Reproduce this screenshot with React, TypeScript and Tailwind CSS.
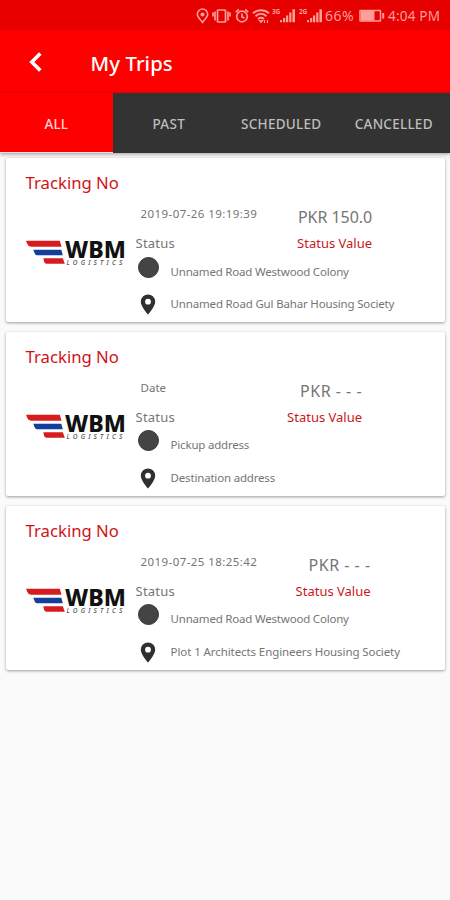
import React from 'react';

type Trip = {
  date: string;
  dateSpacing: string;
  price: string;
  pickup: string;
  destination: string;
  destinationSpacing: string;
  summaryWidth: string;
  priceSpacing: string;
};

const trips: Trip[] = [
  {
    date: '2019-07-26 19:19:39',
    dateSpacing: 'tracking-[0.42px]',
    price: 'PKR 150.0',
    pickup: 'Unnamed Road Westwood Colony',
    destination: 'Unnamed Road Gul Bahar Housing Society',
    destinationSpacing: 'tracking-[-0.170px]',
    summaryWidth: 'w-[236.500px]',
    priceSpacing: 'tracking-[-0.05px]',
  },
  {
    date: 'Date',
    dateSpacing: 'tracking-[0px]',
    price: 'PKR - - -',
    pickup: 'Pickup address',
    destination: 'Destination address',
    destinationSpacing: 'tracking-[-0.180px]',
    summaryWidth: 'w-[226.500px]',
    priceSpacing: 'tracking-[0.5px]',
  },
  {
    date: '2019-07-25 18:25:42',
    dateSpacing: 'tracking-[0.42px]',
    price: 'PKR - - -',
    pickup: 'Unnamed Road Westwood Colony',
    destination: 'Plot 1 Architects Engineers Housing Society',
    destinationSpacing: 'tracking-[-0.090px]',
    summaryWidth: 'w-[235px]',
    priceSpacing: 'tracking-[0.5px]',
  },
];

function Signal({ label }: { label: string }) {
  return (
    <span className="flex w-[24px] items-end">
      <span className="h-[16px] w-[8px] text-[6.5px] font-bold leading-[8px] tracking-[-0.3px]">{label}</span>
      <svg width="16" height="16" viewBox="0 0 16 16" fill="currentColor">
        <path d="M0 12h2v2.300H0zM3 10h2.200v4.300H3zM6 7.500h2.200v6.800H6zM9.200 4.500h2.200v9.800H9.200zM12.400 1.300H15v13h-2.600z" />
      </svg>
    </span>
  );
}

function StatusBar() {
  return (
    <div className="flex h-[30px] items-center bg-[#e60000] pl-[196px] pt-[2px] text-[#ff9d97]">
      <svg className="shrink-0" width="13" height="16" viewBox="0 0 13 16" fill="none" stroke="currentColor" strokeWidth="1.5">
        <path d="M6.500 14.500C4.500 11.500 1.300 9.300 1.300 6.300a5.200 5.200 0 0 1 10.400 0c0 3-3.200 5.200-5.200 8.200z" />
        <circle cx="6.500" cy="6.500" r="1.300" fill="currentColor" />
      </svg>
      <svg className="ml-[3px] shrink-0" width="19" height="16" viewBox="0 0 19 16" fill="none" stroke="currentColor" strokeWidth="1.700">
        <rect x="5.500" y="2" width="8" height="12" rx="0.500" />
        <path d="M3 3.500v9M16 3.500v9M1 4.500v4M18 4.500v4" />
      </svg>
      <svg className="ml-[4px] shrink-0" width="14" height="16" viewBox="0 0 14 16" fill="none" stroke="currentColor" strokeWidth="1.700">
        <circle cx="7" cy="8.500" r="5.300" />
        <path d="M7 5.500v3.500l2.500 1M.8 4.200l3-2.700M13.200 4.200l-3-2.700" />
      </svg>
      <svg className="ml-[3px] shrink-0" width="18" height="16" viewBox="0 0 18 16" fill="none" stroke="currentColor" strokeWidth="1.900">
        <path d="M1 5.300C5.500 1.300 12.500 1.300 17 5.300M3.500 8.300c3.300-3 7.700-3 11 0M6 11c2-1.600 4-1.600 6 0" />
        <path d="m7.500 12.500 1.500 2 1.500-2zM12.500 12v3M15.500 12v3" fill="currentColor" strokeWidth="1.200" />
      </svg>
      <span className="ml-[2px]"><Signal label="3G" /></span>
      <span className="ml-[3px]"><Signal label="2G" /></span>
      <span className="ml-[2px] w-[31px] whitespace-nowrap text-[14px] leading-[16px] tracking-[0.5px]">66%</span>
      <svg className="ml-[3px] shrink-0" width="26" height="16" viewBox="0 0 26 16" fill="none" stroke="currentColor" strokeWidth="1.500">
        <rect x="1" y="2.500" width="20.500" height="10.500" rx="0.500" />
        <path d="M2 3h13.500v9.500H2z" fill="currentColor" stroke="none" />
        <path d="M24.200 5v5.500" strokeWidth="2" />
      </svg>
      <span className="ml-[3px] whitespace-nowrap text-[13.500px] leading-[16px] tracking-[0.2px]">4:04 PM</span>
    </div>
  );
}

function Logo() {
  return (
    <div className="flex h-[28px] w-[100px]">
      <svg className="shrink-0" width="39" height="26" viewBox="0 0 39 26">
        <path d="M0 .8h33.800l1.700 6H5Q2.500 6.800 1.300 4z" fill="#d71c1f" />
        <path d="M7.300 9.800h28l1.500 5.500H11Q9.300 15.300 8.500 13z" fill="#113f9b" />
        <path d="M17.300 18.300h19.500l2 5.500H20.500Q18.800 23.800 18.200 22z" fill="#d71c1f" />
      </svg>
      <div className="flex flex-col items-start">
        <span className="mt-px h-[17px] origin-left scale-x-[1.03] whitespace-nowrap text-[22.500px] font-extrabold leading-[17px] text-[#111]">WBM</span>
        <span className="ml-[2px] mt-px h-[8px] whitespace-nowrap text-[6.5px] font-medium italic leading-[8px] tracking-[3.150px] text-[#555]">LOGISTICS</span>
      </div>
    </div>
  );
}

function TripCard({ trip }: { trip: Trip }) {
  return (
    <article className="h-[164px] rounded-[2px] bg-white pt-[14px] shadow-[0_1px_3px_rgba(0,0,0,0.38)]">
      <h2 className="pl-[20px] text-[16.700px] leading-[21px] text-[#d01217]">Tracking No</h2>
      <div className="flex">
        <div className="w-[130px] pl-[20px] pt-[47px]">
          <Logo />
        </div>
        <div className="flex flex-col pt-[12px] text-[#757575]">
          <div className={`flex h-[22px] justify-between pl-[5px] ${trip.summaryWidth}`}>
            <span className={`whitespace-nowrap text-[11.500px] leading-[18px] ${trip.dateSpacing}`}>{trip.date}</span>
            <span className={`whitespace-nowrap text-[16px] leading-[24px] ${trip.priceSpacing}`}>{trip.price}</span>
          </div>
          <div className={`mt-[7px] flex h-[18px] justify-between text-[13px] leading-[18px] ${trip.summaryWidth}`}>
            <span className="tracking-[0.2px]">Status</span>
            <span className="whitespace-nowrap text-[#c9181c]">Status Value</span>
          </div>
          <div className="mt-[4.500px] flex h-[22px] items-start">
            <span className="ml-[2px] size-[21px] shrink-0 rounded-full border border-[#333] bg-[#444]" />
            <span className="ml-[12px] whitespace-nowrap pt-[6px] text-[11.500px] leading-[18px] tracking-[-0.200px]">{trip.pickup}</span>
          </div>
          <div className="mt-[14.500px] flex h-[22px] items-center">
            <svg className="ml-[4px] mt-[1px]" width="16" height="21" viewBox="0 0 16 21">
              <path fillRule="evenodd" fill="#303030" d="M8 .5A7.200 7.200 0 0 0 .8 7.700C.8 12.500 8 20.500 8 20.500s7.200-8 7.200-12.800A7.200 7.200 0 0 0 8 .5zm0 4.300a2.900 2.900 0 1 1 0 5.800 2.900 2.900 0 0 1 0-5.800z" />
            </svg>
            <span className={`ml-[15px] whitespace-nowrap text-[11.500px] leading-[18px] ${trip.destinationSpacing}`}>{trip.destination}</span>
          </div>
        </div>
      </div>
    </article>
  );
}

export default function App() {
  return (
    <div className="min-h-[900px] w-[450px] bg-[#fafafa] font-['Noto_Sans',sans-serif]">
      <StatusBar />
      <header className="flex h-[63px] items-center bg-[#ff0000] text-white">
        <svg className="ml-[29px]" width="14" height="22" viewBox="0 0 14 22" fill="none" stroke="currentColor" strokeWidth="3.600">
          <path d="m11.300 2.500-8.500 8.500 8.500 8.500" />
        </svg>
        <h1 className="ml-[47.500px] pt-[3px] text-[20.300px] font-medium leading-[26px] tracking-[0.1px]">My Trips</h1>
      </header>
      <nav className="grid h-[60px] grid-cols-4 bg-[#333] text-center text-[13.500px] font-medium leading-[62px] text-[#bdbdbd] shadow-[0_1px_4px_rgba(0,0,0,0.4)]">
        <span className="h-[60px] border-b border-[#f2dcda] bg-[#ff0000] text-[#ffd9d6]">ALL</span>
        <span className="h-[60px] tracking-[0.3px]">PAST</span>
        <span className="h-[60px] tracking-[0.250px]">SCHEDULED</span>
        <span className="h-[60px] tracking-[0.250px]">CANCELLED</span>
      </nav>
      <main className="flex flex-col gap-[9.800px] pl-[5.600px] pr-[4.800px] pt-[5px]">
        {trips.map((trip) => (
          <TripCard key={trip.destination} trip={trip} />
        ))}
      </main>
    </div>
  );
}
